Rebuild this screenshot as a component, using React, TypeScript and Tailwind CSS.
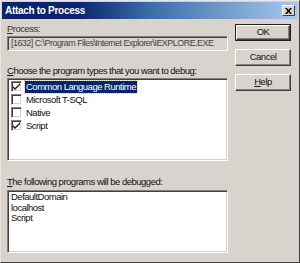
const font = "font-['Liberation_Sans',sans-serif]";

const sunken =
  "border border-t-[#808080] border-l-[#808080] border-b-white border-r-white shadow-[inset_1px_1px_0_#404040,inset_-1px_-1px_0_#d4d0c8]";

function Check({ checked }: { checked: boolean }) {
  return (
    <span className={`w-[11px] h-[11px] shrink-0 bg-white ${sunken} flex items-center justify-center`}>
      {checked && (
        <svg width="7" height="7" viewBox="0 0 7 7">
          <path d="M0 3 L2 5 L7 0 L7 2 L2 7 L0 5 Z" fill="#222" />
        </svg>
      )}
    </span>
  );
}

function Button({ label, def, accel }: { label: string; def?: boolean; accel?: boolean }) {
  return (
    <div className={`h-[17px] w-[56px] ${def ? "border border-[#202020]" : ""}`}>
      <div className="h-full w-full border border-t-white border-l-white border-b-[#404040] border-r-[#404040] shadow-[inset_-1px_-1px_0_#808080] flex items-center justify-center text-[#111]">
        {accel ? (
          <span>
            <span className="underline">H</span>elp
          </span>
        ) : (
          label
        )}
      </div>
    </div>
  );
}

const types = [
  { name: "Common Language Runtime", checked: true, selected: true },
  { name: "Microsoft T-SQL", checked: false },
  { name: "Native", checked: false },
  { name: "Script", checked: true },
];

export default function App() {
  return (
    <div
      className={`w-[300px] h-[263px] bg-[#d9d3ce] ${font} text-[9.5px] tracking-[-0.5px] text-[#111] border border-t-[#e8e4e0] border-l-[#e8e4e0] border-b-[#404040] border-r-[#404040] flex flex-col`}
    >
      <div className="h-[17px] mx-[1px] mt-[1px] bg-gradient-to-r from-[#0a246a] from-[25%] via-[#3a6ea5] to-[#a6caf0] flex items-center justify-between pl-[3px] pr-[3px]">
        <span className="text-white font-bold text-[10px] tracking-[-0.3px]">Attach to Process</span>
        <div className="w-[13px] h-[11px] bg-[#d9d3ce] border border-t-white border-l-white border-b-[#404040] border-r-[#404040] flex items-center justify-center">
          <svg width="7" height="6" viewBox="0 0 7 6">
            <path d="M0 0 L2 0 L3.5 2 L5 0 L7 0 L4.5 3 L7 6 L5 6 L3.5 4 L2 6 L0 6 L2.5 3 Z" fill="#000" />
          </svg>
        </div>
      </div>

      <div className="flex pl-[6px] pt-[4px]">
        <div className="w-[221px] flex flex-col">
          <div className="h-[12px] leading-[12px] text-[#333]">
            <span className="underline">P</span>rocess:
          </div>
          <div className={`mt-[1px] h-[15px] ${sunken} flex items-center pl-[3px] text-[#444] text-[9px] tracking-[-0.55px] whitespace-nowrap overflow-hidden`}>
            [1632] C:\Program Files\Internet Explorer\IEXPLORE.EXE
          </div>

          <div className="mt-[14px] h-[12px] leading-[12px] whitespace-nowrap">
            <span className="underline">C</span>hoose the program types that you want to debug:
          </div>
          <div className={`mt-[1px] h-[83px] bg-white ${sunken} pt-[1px] pl-[3px] flex flex-col`}>
            {types.map((t) => (
              <div key={t.name} className="h-[13px] flex items-center gap-[3px]">
                <Check checked={t.checked} />
                <span
                  className={
                    t.selected
                      ? "bg-[#0a246a] text-white px-[1px] leading-[12px] outline outline-1 outline-dotted outline-[#e0c080]"
                      : "leading-[12px] px-[1px]"
                  }
                >
                  {t.name}
                </span>
              </div>
            ))}
          </div>

          <div className="mt-[15px] h-[12px] leading-[12px] whitespace-nowrap">
            <span className="underline">T</span>he following programs will be debugged:
          </div>
          <div className={`mt-[2px] h-[63px] bg-white ${sunken} pt-[1px] pl-[3px] flex flex-col`}>
            {["DefaultDomain", "localhost", "Script"].map((p) => (
              <div key={p} className="h-[10.5px] leading-[10.5px]">
                {p}
              </div>
            ))}
          </div>
        </div>

        <div className="ml-[7px] mt-[1px] flex flex-col gap-[8px]">
          <Button label="OK" def />
          <Button label="Cancel" />
          <Button label="Help" accel />
        </div>
      </div>
    </div>
  );
}
